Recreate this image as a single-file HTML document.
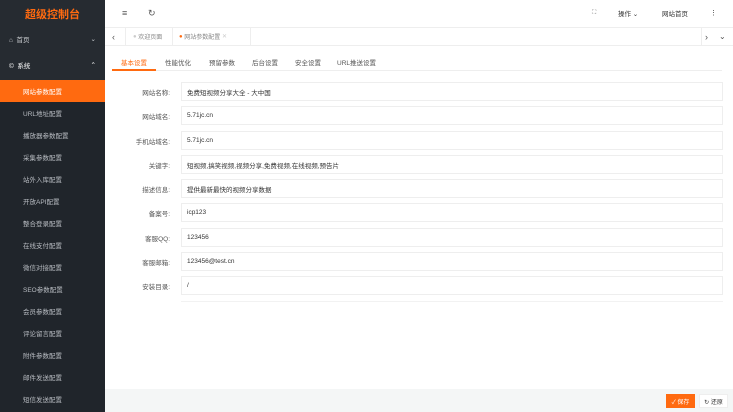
<!DOCTYPE html><html><head><meta charset="utf-8"><style>
*{margin:0;padding:0;box-sizing:border-box}
body{width:733px;height:412px;overflow:hidden;font-family:"Liberation Sans","Noto Sans CJK SC",sans-serif;font-size:7px;color:#333;background:#fff;position:relative}
.side{position:absolute;left:0;top:0;width:105px;height:412px;background:#20252b}
.logo{height:28px;color:#ff6a10;font-size:11px;font-weight:bold;display:flex;align-items:center;justify-content:center;background:#262b31}
.top{position:absolute;left:0;top:28px;width:105px;height:52px;background:#262b31}
.mi{position:absolute;left:0;width:105px;height:22px;display:flex;align-items:center;color:#c9ccd0;font-size:6.5px}
.sub{padding-left:23px;color:#b8bcc2}
.act{background:#ff6a10;color:#fff}
.hdr{position:absolute;left:105px;top:0;right:0;height:27px;background:#fff}
.tabs{position:absolute;left:105px;top:27px;right:0;height:19px;border-top:1px solid #eee;border-bottom:1px solid #eee;background:#fff}
.lbl{position:absolute;width:65px;left:105px;height:19px;display:flex;align-items:center;justify-content:flex-end;color:#555;font-size:6.5px}
.inp{position:absolute;left:181px;width:542px;height:19px;border:1px solid #eee;display:flex;align-items:center;padding-left:5px;font-size:6.5px;color:#333}
.foot{position:absolute;left:105px;right:0;top:389px;bottom:0;background:#f4f6f6}
.c{position:absolute;display:flex;align-items:center}
</style></head><body>
<div class="side">
<div class="logo">超级控制台</div>
<div class="top"></div>
<div class="mi" style="top:28px;padding-left:9px">⌂ &nbsp;首页<span style="position:absolute;right:9px">⌄</span></div>
<div class="mi" style="top:54px;padding-left:9px;color:#fff">© &nbsp;系统<span style="position:absolute;right:9px">⌃</span></div>
<div class="mi sub act" style="top:80px">网站参数配置</div>
<div class="mi sub" style="top:102px">URL地址配置</div>
<div class="mi sub" style="top:124px">播放器参数配置</div>
<div class="mi sub" style="top:146px">采集参数配置</div>
<div class="mi sub" style="top:168px">站外入库配置</div>
<div class="mi sub" style="top:190px">开放API配置</div>
<div class="mi sub" style="top:212px">整合登录配置</div>
<div class="mi sub" style="top:234px">在线支付配置</div>
<div class="mi sub" style="top:256px">微信对接配置</div>
<div class="mi sub" style="top:278px">SEO参数配置</div>
<div class="mi sub" style="top:300px">会员参数配置</div>
<div class="mi sub" style="top:322px">评论留言配置</div>
<div class="mi sub" style="top:344px">附件参数配置</div>
<div class="mi sub" style="top:366px">邮件发送配置</div>
<div class="mi sub" style="top:388px">短信发送配置</div>
</div>
<div class="hdr">
<span class="c" style="left:17px;top:6px;height:14px;font-size:9px;color:#555">≡</span>
<span class="c" style="left:43px;top:6px;height:14px;font-size:9px;color:#555">↻</span>
<span class="c" style="left:487px;top:6px;height:14px;color:#777;font-size:6px">⛶</span>
<span class="c" style="left:513px;top:6px;height:14px;font-size:6.5px">操作 ⌄</span>
<span class="c" style="left:557px;top:6px;height:14px;font-size:6.5px">网站首页</span>
<span class="c" style="left:605px;top:6px;height:14px">⋮</span>
</div>
<div class="tabs">
<span class="c" style="left:7px;top:0;height:17px;font-size:9px;color:#555">‹</span>
<div class="c" style="left:20px;top:0;width:48px;height:17px;border-left:1px solid #eee;border-right:1px solid #eee;padding-left:7px;color:#888;font-size:6px"><span style="color:#ccc">●</span>&nbsp;欢迎页面</div>
<div class="c" style="left:68px;top:0;width:78px;height:17px;border-right:1px solid #eee;padding-left:6px;color:#888;font-size:6px"><span style="color:#ff6a10">●</span>&nbsp;网站参数配置&nbsp;<span style="color:#ccc">✕</span></div>
<span class="c" style="left:596px;top:0;height:17px;border-left:1px solid #eee;padding-left:3px;font-size:9px;color:#555">›</span>
<span class="c" style="left:614px;top:0;height:17px;font-size:8px;color:#555">⌄</span>
</div>
<div style="position:absolute;left:112px;top:55px;width:610px;height:16px;border-bottom:1px solid #eee;font-size:6.5px;color:#555">
<span class="c" style="left:0;width:44px;justify-content:center;color:#ff6a10;border-bottom:2px solid #ff6a10;height:16px">基本设置</span>
<span class="c" style="left:53px;height:14px">性能优化</span>
<span class="c" style="left:97px;height:14px">预留参数</span>
<span class="c" style="left:140px;height:14px">后台设置</span>
<span class="c" style="left:183px;height:14px">安全设置</span>
<span class="c" style="left:225px;height:14px">URL推送设置</span>
</div>
<div class="lbl" style="top:82px">网站名称:</div><div class="inp" style="top:82px">免费短视频分享大全 - 大中国</div>
<div class="lbl" style="top:106px">网站域名:</div><div class="inp" style="top:106px">5.71jc.cn</div>
<div class="lbl" style="top:131px">手机站域名:</div><div class="inp" style="top:131px">5.71jc.cn</div>
<div class="lbl" style="top:155px">关键字:</div><div class="inp" style="top:155px">短视频,搞笑视频,视频分享,免费视频,在线视频,预告片</div>
<div class="lbl" style="top:179px">描述信息:</div><div class="inp" style="top:179px">提供最新最快的视频分享数据</div>
<div class="lbl" style="top:203px">备案号:</div><div class="inp" style="top:203px">icp123</div>
<div class="lbl" style="top:228px">客服QQ:</div><div class="inp" style="top:228px">123456</div>
<div class="lbl" style="top:252px">客服邮箱:</div><div class="inp" style="top:252px">123456@test.cn</div>
<div class="lbl" style="top:276px">安装目录:</div><div class="inp" style="top:276px">/</div>
<div style="position:absolute;left:181px;top:301px;width:542px;border-top:1px solid #f2f2f2"></div>
<div class="foot">
<div class="c" style="left:561px;top:5px;width:29px;height:14px;background:#ff6a10;color:#fff;font-size:6px;justify-content:center">✓ 保存</div>
<div class="c" style="left:594px;top:5px;width:29px;height:14px;background:#fff;border:1px solid #eee;font-size:6px;justify-content:center">↻ 还原</div>
</div>
</body></html>
